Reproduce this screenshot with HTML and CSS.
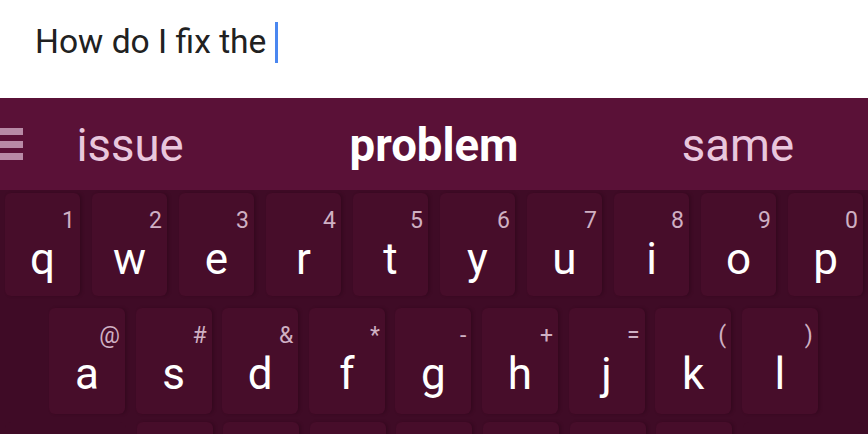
FILE: index.html
```html
<!DOCTYPE html>
<html>
<head>
<meta charset="utf-8">
<link rel="stylesheet" href="styles.css">
</head>
<body>
<div class="screen">
  <div class="input-area">
    <span class="typed">How do I fix the</span><span class="cursor"></span>
  </div>
  <div class="keyboard">
    <div class="suggestions">
      <div class="menu-icon"><span></span><span></span><span></span></div>
      <div class="sugg">issue</div>
      <div class="sugg main">problem</div>
      <div class="sugg">same</div>
    </div>
    <div class="keys">
      <div class="row">
        <div class="key"><span class="hint">1</span><span class="letter">q</span></div>
        <div class="key"><span class="hint">2</span><span class="letter">w</span></div>
        <div class="key"><span class="hint">3</span><span class="letter">e</span></div>
        <div class="key"><span class="hint">4</span><span class="letter">r</span></div>
        <div class="key"><span class="hint">5</span><span class="letter">t</span></div>
        <div class="key"><span class="hint">6</span><span class="letter">y</span></div>
        <div class="key"><span class="hint">7</span><span class="letter">u</span></div>
        <div class="key"><span class="hint">8</span><span class="letter">i</span></div>
        <div class="key"><span class="hint">9</span><span class="letter">o</span></div>
        <div class="key"><span class="hint">0</span><span class="letter">p</span></div>
      </div>
      <div class="row row2">
        <div class="key"><span class="hint">@</span><span class="letter">a</span></div>
        <div class="key"><span class="hint">#</span><span class="letter">s</span></div>
        <div class="key"><span class="hint">&amp;</span><span class="letter">d</span></div>
        <div class="key"><span class="hint">*</span><span class="letter">f</span></div>
        <div class="key"><span class="hint">-</span><span class="letter">g</span></div>
        <div class="key"><span class="hint">+</span><span class="letter">h</span></div>
        <div class="key"><span class="hint">=</span><span class="letter">j</span></div>
        <div class="key"><span class="hint">(</span><span class="letter">k</span></div>
        <div class="key"><span class="hint">)</span><span class="letter">l</span></div>
      </div>
      <div class="row row3">
        <div class="key fn wide"></div>
        <div class="key"></div>
        <div class="key"></div>
        <div class="key"></div>
        <div class="key"></div>
        <div class="key"></div>
        <div class="key"></div>
        <div class="key"></div>
        <div class="key fn wide"></div>
      </div>
    </div>
  </div>
</div>
</body>
</html>
```
FILE: styles.css
```css
* { box-sizing: border-box; }
html, body {
  margin: 0;
  padding: 0;
  width: 868px;
  height: 434px;
  overflow: hidden;
  font-family: Roboto, "Noto Sans", sans-serif;
}
.screen {
  width: 868px;
  height: 434px;
  display: flex;
  flex-direction: column;
  background: #ffffff;
  overflow: hidden;
}
.input-area {
  height: 98px;
  flex-shrink: 0;
  display: flex;
  align-items: flex-start;
  padding: 21px 0 0 35px;
}
.typed {
  font-size: 33.6px;
  line-height: 42px;
  color: #212121;
}
.cursor {
  display: inline-block;
  width: 3px;
  height: 41px;
  margin-left: 9px;
  margin-top: 1px;
  background: #4a87f0;
}
.keyboard {
  flex: 1;
  display: flex;
  flex-direction: column;
  background: #3f0b26;
  overflow: hidden;
}
.suggestions {
  position: relative;
  height: 92px;
  flex-shrink: 0;
  background: #5a1137;
  display: flex;
  justify-content: center;
  align-items: center;
  overflow: hidden;
}
.menu-icon {
  position: absolute;
  left: -1px;
  top: 30px;
  width: 24px;
  display: flex;
  flex-direction: column;
  gap: 5.5px;
}
.menu-icon span {
  display: block;
  height: 7px;
  background: #b88aa6;
}
.sugg {
  flex: 0 0 304px;
  text-align: center;
  font-size: 45.5px;
  line-height: 52px;
  color: #e9c7dd;
  margin-top: 4px;
}
.sugg.main {
  color: #ffffff;
  font-weight: 700;
}
.keys {
  flex: 1;
  display: flex;
  flex-direction: column;
  gap: 12px;
  padding: 3px 0 0 5px;
}
.row {
  display: flex;
  gap: 12px;
  height: 103px;
  flex-shrink: 0;
}
.row2 {
  padding-left: 44px;
  height: 106px;
  gap: 10.6px;
}
.row3 {
  height: 103px;
  margin-top: -4px;
  gap: 10.6px;
}
.key {
  width: 75px;
  flex-shrink: 0;
  background: #470d2a;
  border-radius: 6px;
  display: flex;
  flex-direction: column;
  box-shadow: 2px 0 3px rgba(40, 5, 22, 0.4);
}
.row2 .key, .row3 .key { width: 76px; }
.key.fn { background: #3f0b26; box-shadow: none; }
.row3 .key.wide { width: 121px; }
.hint {
  font-size: 23px;
  line-height: 23px;
  color: #cfb0c3;
  text-align: right;
  padding: 16px 5px 0 0;
}
.letter {
  font-size: 44px;
  line-height: 44px;
  color: #ffffff;
  text-align: center;
  margin-top: 5px;
}
```
